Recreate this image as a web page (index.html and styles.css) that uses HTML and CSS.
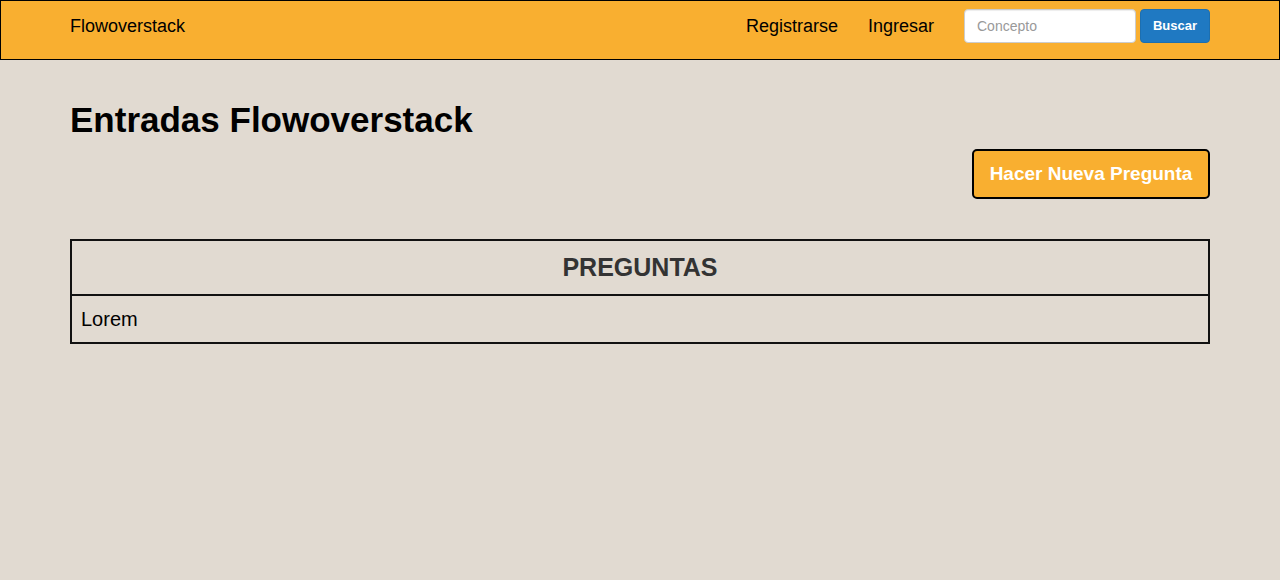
FILE: index.html
```html
<!DOCTYPE html>
<html lang="es">
<head>
<meta charset="utf-8">
<title>Flowoverstack</title>
<link rel="stylesheet" href="styles.css">
</head>
<body>
<nav class="navbar">
  <div class="container nav-inner">
    <a class="brand" href="#">Flowoverstack</a>
    <div class="nav-right">
      <a class="nav-link" href="#">Registrarse</a>
      <a class="nav-link" href="#">Ingresar</a>
      <form class="search">
        <input class="search-input" type="text" placeholder="Concepto">
        <button class="search-btn" type="button">Buscar</button>
      </form>
    </div>
  </div>
</nav>
<main class="container">
  <h1 class="title">Entradas Flowoverstack</h1>
  <div class="actions">
    <button class="ask-btn" type="button">Hacer Nueva Pregunta</button>
  </div>
  <table class="questions">
    <thead>
      <tr><th>PREGUNTAS</th></tr>
    </thead>
    <tbody>
      <tr><td>Lorem</td></tr>
    </tbody>
  </table>
</main>
</body>
</html>
```

FILE: styles.css
```css
* { box-sizing: border-box; }
html, body { margin: 0; padding: 0; }
body {
  background: #e1dad1;
  font-family: "Liberation Sans", Arial, sans-serif;
  color: #000;
  height: 580px;
}
.container {
  width: 1140px;
  margin: 0 auto;
}
.navbar {
  background: #f9af30;
  border: 1px solid #000;
  height: 60px;
}
.nav-inner {
  display: flex;
  align-items: center;
  justify-content: space-between;
  height: 58px;
}
.brand {
  font-size: 18px;
  color: #000;
  text-decoration: none;
  margin-top: -8px;
}
.nav-right {
  display: flex;
  align-items: center;
  height: 100%;
}
.nav-link {
  font-size: 18px;
  color: #000;
  text-decoration: none;
  margin-right: 30px;
  margin-top: -8px;
}
.nav-link:first-child { margin-left: 2px; }
.search {
  display: flex;
  gap: 4px;
  margin: 0;
  margin-top: -9px;
}
.search-input {
  width: 172px;
  height: 34px;
  border: 1px solid #ccc;
  border-radius: 4px;
  padding: 6px 12px;
  font-family: "Liberation Sans", Arial, sans-serif;
  font-size: 14px;
  background: #fff;
  box-shadow: inset 0 1px 1px rgba(0,0,0,.075);
}
.search-input::placeholder { color: #999; }
.search-btn {
  width: 70px;
  height: 34px;
  border: 1px solid #1d6fb0;
  border-radius: 4px;
  background: #1f79c2;
  color: #fff;
  font-family: "Liberation Sans", Arial, sans-serif;
  font-size: 13px;
  font-weight: bold;
  padding: 0;
}
.title {
  font-size: 35px;
  font-weight: bold;
  margin: 40px 0 0;
  line-height: 40px;
}
.actions {
  display: flex;
  justify-content: flex-end;
  margin-top: 9px;
}
.ask-btn {
  background: #f9af30;
  border: 2px solid #000;
  border-radius: 5px;
  color: #fff;
  font-family: "Liberation Sans", Arial, sans-serif;
  font-size: 19px;
  font-weight: bold;
  height: 50px;
  width: 238px;
  padding: 0;
}
.questions {
  width: 100%;
  margin-top: 40px;
  border-collapse: collapse;
  border: 2px solid #111;
}
.questions th {
  border: 2px solid #111;
  height: 55px;
  font-size: 25px;
  font-weight: bold;
  color: #333;
  text-align: center;
  padding: 0;
}
.questions td {
  border: 2px solid #111;
  height: 48px;
  font-size: 20px;
  padding: 0 9px;
}
```
